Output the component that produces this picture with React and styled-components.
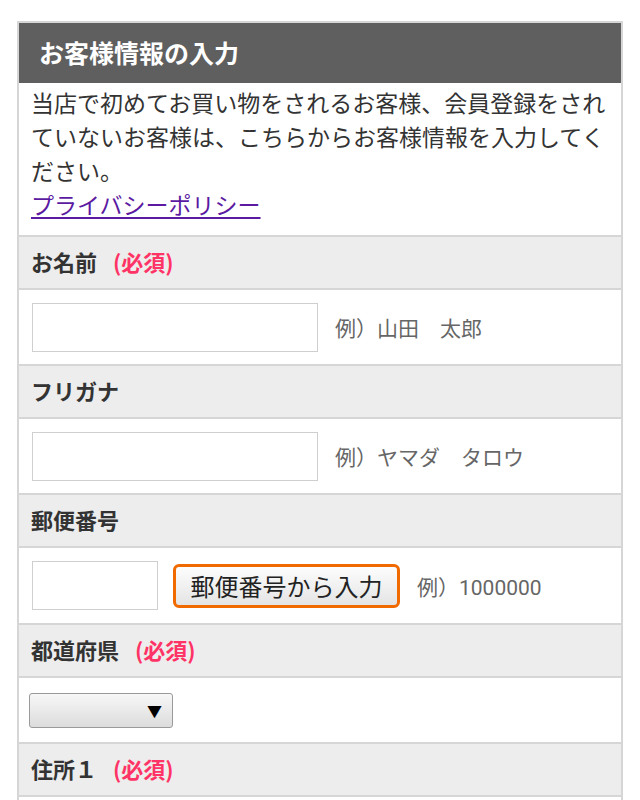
import styled, { createGlobalStyle } from "styled-components";

const GlobalStyle = createGlobalStyle`
  body {
    margin: 0;
    padding: 21px 17px 0;
    background: #fff;
    font-family: Roboto, "Noto Sans CJK JP", sans-serif;
    color: #333;
  }
`;

const fields = [
  { label: "お名前", required: true, kind: "text", example: "例）山田　太郎" },
  { label: "フリガナ", kind: "text", example: "例）ヤマダ　タロウ" },
  { label: "郵便番号", kind: "zip", example: "例）1000000" },
  { label: "都道府県", required: true, kind: "select" },
  { label: "住所１", required: true, kind: "none" },
];

function App() {
  return (
    <>
      <GlobalStyle />
      <Panel>
        <PanelTitle>お客様情報の入力</PanelTitle>
        <Intro>
          当店で初めてお買い物をされるお客様、会員登録をされていないお客様は、こちらからお客様情報を入力してください。
          <br />
          <PolicyLink href="#">プライバシーポリシー</PolicyLink>
        </Intro>
        {fields.map((f) => (
          <div key={f.label}>
            <LabelRow>
              {f.label}
              {f.required && <Required>(必須)</Required>}
            </LabelRow>
            {f.kind === "text" && (
              <FieldRow $height={74}>
                <TextInput $width={286} />
                <Example>{f.example}</Example>
              </FieldRow>
            )}
            {f.kind === "zip" && (
              <FieldRow $height={75}>
                <TextInput $width={126} />
                <ZipButton>郵便番号から入力</ZipButton>
                <Example>{f.example}</Example>
              </FieldRow>
            )}
            {f.kind === "select" && (
              <SelectRow>
                <SelectBox>
                  <span>▼</span>
                </SelectBox>
              </SelectRow>
            )}
          </div>
        ))}
      </Panel>
    </>
  );
}

const Panel = styled.div`
  border: 2px solid #d6d6d6;
  border-bottom: none;
  min-height: 790px;
`;

const PanelTitle = styled.h2`
  margin: 0;
  height: 60px;
  display: flex;
  align-items: center;
  padding: 0 20px 2px;
  box-sizing: border-box;
  background: #5f5f5f;
  color: #fff;
  font-size: 25px;
  font-weight: 700;
`;

const Intro = styled.div`
  padding: 5px 12px 11px;
  font-size: 23px;
  line-height: 34px;
  color: #333;
`;

const PolicyLink = styled.a`
  color: #5b1aa1;
  text-decoration: underline;
  text-underline-offset: 3px;
`;

const LabelRow = styled.div`
  display: flex;
  align-items: center;
  box-sizing: border-box;
  height: 55px;
  padding: 0 12px 4px;
  background: #ededed;
  border-top: 2px solid #d6d6d6;
  border-bottom: 2px solid #d6d6d6;
  font-size: 22px;
  font-weight: 700;
  color: #333;
`;

const Required = styled.span`
  margin-left: 16px;
  color: #ff3366;
  font-family: "Noto Sans CJK JP", sans-serif;
  font-weight: 700;
`;

const FieldRow = styled.div`
  display: flex;
  align-items: center;
  gap: 15px;
  height: ${({ $height }) => $height}px;
  padding: 0 13px;
`;

const SelectRow = styled.div`
  display: flex;
  align-items: center;
  height: 64px;
  padding: 0 10px;
`;

const TextInput = styled.input`
  box-sizing: border-box;
  width: ${({ $width }) => $width}px;
  height: 49px;
  border: 1px solid #cfcfcf;
  background: #fff;
  margin: 0;
`;

const Example = styled.span`
  font-size: 21px;
  color: #666;
  margin-left: 2px;
`;

const ZipButton = styled.button`
  box-sizing: border-box;
  height: 44px;
  width: 227px;
  padding: 0;
  border: 3px solid #f06a00;
  border-radius: 6px;
  background: linear-gradient(#fdfdfd, #e4e4e4);
  font-family: Roboto, "Noto Sans CJK JP", sans-serif;
  font-size: 24px;
  color: #222;
`;

const SelectBox = styled.div`
  box-sizing: border-box;
  width: 144px;
  height: 35px;
  border: 1px solid #9a9a9a;
  border-radius: 3px;
  background: linear-gradient(#f7f7f7, #dcdcdc);
  display: flex;
  align-items: center;
  justify-content: flex-end;
  padding-right: 10px;
  font-size: 15px;
  color: #000;
`;

export default App;
